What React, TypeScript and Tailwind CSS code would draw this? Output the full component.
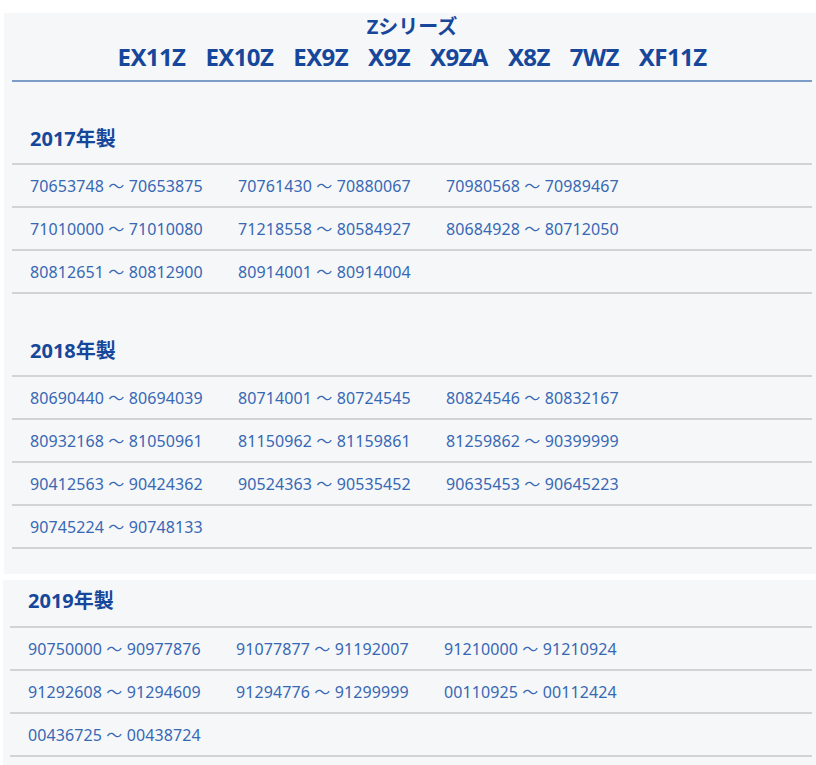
import React from "react";

const models = ["EX11Z", "EX10Z", "EX9Z", "X9Z", "X9ZA", "X8Z", "7WZ", "XF11Z"];

const y2017 = [
  "70653748 ～ 70653875",
  "70761430 ～ 70880067",
  "70980568 ～ 70989467",
  "71010000 ～ 71010080",
  "71218558 ～ 80584927",
  "80684928 ～ 80712050",
  "80812651 ～ 80812900",
  "80914001 ～ 80914004",
];
const y2018 = [
  "80690440 ～ 80694039",
  "80714001 ～ 80724545",
  "80824546 ～ 80832167",
  "80932168 ～ 81050961",
  "81150962 ～ 81159861",
  "81259862 ～ 90399999",
  "90412563 ～ 90424362",
  "90524363 ～ 90535452",
  "90635453 ～ 90645223",
  "90745224 ～ 90748133",
];
const y2019 = [
  "90750000 ～ 90977876",
  "91077877 ～ 91192007",
  "91210000 ～ 91210924",
  "91292608 ～ 91294609",
  "91294776 ～ 91299999",
  "00110925 ～ 00112424",
  "00436725 ～ 00438724",
];

const font = { fontFamily: '"Noto Sans", "Noto Sans CJK JP", sans-serif' };

function Rows({ items }: { items: string[] }) {
  const rows: string[][] = [];
  for (let i = 0; i < items.length; i += 3) rows.push(items.slice(i, i + 3));
  return (
    <div className="border-t-2 border-[#d3d3d3]">
      {rows.map((r, i) => (
        <div key={i} className="flex h-[43px] items-center border-b-2 border-[#d3d3d3] pl-[18px]">
          {r.map((t) => (
            <div key={t} className="w-[208px] shrink-0 text-[16px] text-[#3768b4] leading-[20px] tracking-[0.1px]">
              {t}
            </div>
          ))}
        </div>
      ))}
    </div>
  );
}

function Heading({ children }: { children: React.ReactNode }) {
  return (
    <div className="pl-[18px] text-[20px] font-bold leading-[24px] text-[#16479b]">{children}</div>
  );
}

export default function App() {
  return (
    <div className="min-h-screen bg-white pt-[13px]" style={font}>
      <div className="ml-[4px] bg-[#f6f7f9] pb-[25px] pl-[8px] pr-[4px]">
        <div className="pt-[2px] text-center text-[#16479b]">
          <div className="text-[20px] font-bold leading-[24px]">Zシリーズ</div>
          <div className="mt-[6px] flex justify-center gap-[20px] text-[24px] font-bold leading-[24px] tracking-[-0.6px]">
            {models.map((m) => (
              <span key={m}>{m}</span>
            ))}
          </div>
        </div>
        <div className="mt-[11px] h-[2px] bg-[#7d9dc7]" />
        <div className="pt-[45px]">
          <div className="pb-[12px]">
            <Heading>2017年製</Heading>
          </div>
          <Rows items={y2017} />
        </div>
        <div className="pt-[45px]">
          <div className="pb-[12px]">
            <Heading>2018年製</Heading>
          </div>
          <Rows items={y2018} />
        </div>
      </div>
      <div className="ml-[3px] mt-[6px] bg-[#f6f7f9] pb-[25px] pl-[7px] pr-[4px]">
        <div className="pt-[9px] pb-[13px]">
          <Heading>2019年製</Heading>
        </div>
        <Rows items={y2019} />
      </div>
    </div>
  );
}
